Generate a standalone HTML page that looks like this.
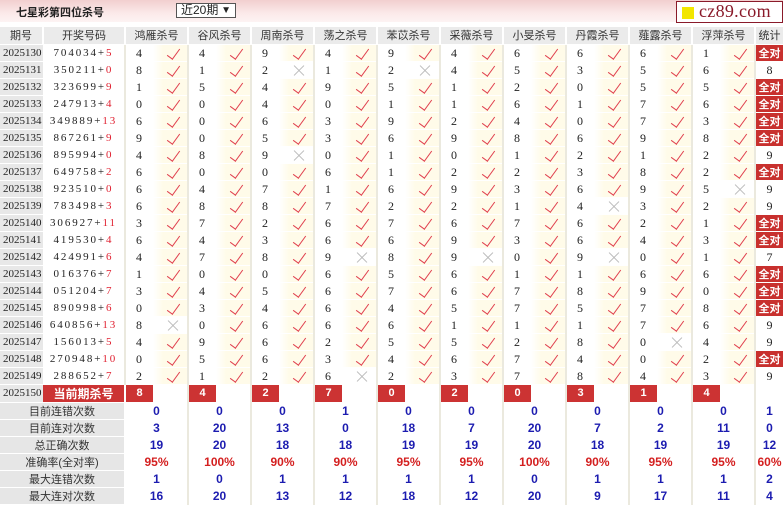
<!DOCTYPE html>
<html><head><meta charset="utf-8"><style>
*{margin:0;padding:0;box-sizing:border-box}
body{width:783px;height:503px;overflow:hidden;background:#fff;font-family:"Liberation Serif","Noto Serif CJK SC",serif;font-size:12px;color:#222;position:relative}
.bar{position:absolute;left:0;top:0;width:783px;height:22px;background:linear-gradient(#f2cfcf,#fbe9e9 60%,#fdf3f3)}
.ttl{position:absolute;left:16px;top:4px;font:bold 11px "Liberation Sans","Noto Sans CJK SC",sans-serif;color:#222}
.sel{position:absolute;left:176px;top:3px;width:60px;height:15px;border:1px solid #555;background:#fff;font:12px "Liberation Sans","Noto Sans CJK SC",sans-serif;line-height:13px;padding-left:4px}
.sel b{position:absolute;right:4px;top:0;font-size:10px}
.logo{position:absolute;left:676px;top:1px;width:107px;height:22px;border:1px solid #8a1a2a;background:#fff;font:18px "Liberation Serif",serif;color:#8a1a2a;line-height:19px;padding-left:22px;letter-spacing:0.3px;overflow:hidden;white-space:nowrap}
.logo i{position:absolute;left:5px;top:5px;width:12px;height:12px;background:#f2e600}
table{position:absolute;left:0;top:27px;border-collapse:collapse;table-layout:fixed;width:783px}
td{height:17px;padding:0;border-bottom:1px solid #fff;text-align:center;white-space:nowrap;overflow:hidden;line-height:16px}
tr.h td{background:#ebebeb;font:11px "Liberation Sans","Noto Sans CJK SC",sans-serif;color:#333;border-right:2px solid #fff}
td.p{background:#e8e8e8;font-size:11px;text-align:left;padding-left:3px}
td.q{letter-spacing:1.9px;font-size:11px}
td.q span{color:#e02030}
td.n{border-left:2px solid #ebe9de;text-align:left;padding-left:10px}
td.k{background:linear-gradient(90deg,#fff,#fffbe9 30%);position:relative}
td.x{background:#fff;position:relative}
td.k:before{content:"";position:absolute;left:17px;top:1px;width:6px;height:12px;border-right:1.6px solid #e0404e;border-bottom:1.6px solid #e0404e;transform:rotate(36deg)}
td.x:before,td.x:after{content:"";position:absolute;left:13px;top:8px;width:14px;height:1px;background:#bbb;transform:rotate(45deg)}
td.x:after{transform:rotate(-45deg)}
td.s{border-left:2px solid #ebe9de}
td.a{background:#c8302e;color:#fff;font:bold 11px "Liberation Sans","Noto Sans CJK SC",sans-serif;border-left:2px solid #ebe9de}
td.r{background:#cc3333;color:#fff;font:bold 12px "Liberation Sans","Noto Sans CJK SC",sans-serif}
td.rb{background:#cc3333;color:#fff;font:bold 11px "Liberation Sans",sans-serif;border-left:2px solid #ebe9de}
td.L{background:#e6e6e6;font:11px "Liberation Sans","Noto Sans CJK SC",sans-serif;color:#333;border-right:2px solid #fff}
td.v{font:bold 12px "Liberation Sans",sans-serif;color:#1c1cb0;border-left:2px solid #ebe9de}
td.v.z{color:#d42020}
</style></head><body>
<div class="bar"></div>
<div class="ttl">七星彩第四位杀号</div>
<div class="sel">近20期<b>&#9660;</b></div>
<div class="logo"><i></i>cz89.com</div>
<table>
<colgroup><col style="width:43px"><col style="width:82px">
<col style="width:28px"><col style="width:35px"><col style="width:28px"><col style="width:35px"><col style="width:28px"><col style="width:35px"><col style="width:28px"><col style="width:35px"><col style="width:28px"><col style="width:35px"><col style="width:28px"><col style="width:35px"><col style="width:28px"><col style="width:35px"><col style="width:28px"><col style="width:35px"><col style="width:28px"><col style="width:35px"><col style="width:28px"><col style="width:35px">
<col style="width:28px"></colgroup>
<tr class="h"><td>期号</td><td>开奖号码</td><td colspan="2">鸿雁杀号</td><td colspan="2">谷风杀号</td><td colspan="2">周南杀号</td><td colspan="2">荡之杀号</td><td colspan="2">苯苡杀号</td><td colspan="2">采薇杀号</td><td colspan="2">小旻杀号</td><td colspan="2">丹霞杀号</td><td colspan="2">薤露杀号</td><td colspan="2">浮萍杀号</td><td style="border-right:0">统计</td></tr>
<tr><td class="p">2025130</td><td class="q">704034+<span>5</span></td><td class="n">4</td><td class="k"></td><td class="n">4</td><td class="k"></td><td class="n">9</td><td class="k"></td><td class="n">4</td><td class="k"></td><td class="n">9</td><td class="k"></td><td class="n">4</td><td class="k"></td><td class="n">6</td><td class="k"></td><td class="n">6</td><td class="k"></td><td class="n">6</td><td class="k"></td><td class="n">1</td><td class="k"></td><td class="a">全对</td></tr>
<tr><td class="p">2025131</td><td class="q">350211+<span>0</span></td><td class="n">8</td><td class="k"></td><td class="n">1</td><td class="k"></td><td class="n">2</td><td class="x"></td><td class="n">1</td><td class="k"></td><td class="n">2</td><td class="x"></td><td class="n">4</td><td class="k"></td><td class="n">5</td><td class="k"></td><td class="n">3</td><td class="k"></td><td class="n">5</td><td class="k"></td><td class="n">6</td><td class="k"></td><td class="s">8</td></tr>
<tr><td class="p">2025132</td><td class="q">323699+<span>9</span></td><td class="n">1</td><td class="k"></td><td class="n">5</td><td class="k"></td><td class="n">4</td><td class="k"></td><td class="n">9</td><td class="k"></td><td class="n">5</td><td class="k"></td><td class="n">1</td><td class="k"></td><td class="n">2</td><td class="k"></td><td class="n">0</td><td class="k"></td><td class="n">5</td><td class="k"></td><td class="n">5</td><td class="k"></td><td class="a">全对</td></tr>
<tr><td class="p">2025133</td><td class="q">247913+<span>4</span></td><td class="n">0</td><td class="k"></td><td class="n">0</td><td class="k"></td><td class="n">4</td><td class="k"></td><td class="n">0</td><td class="k"></td><td class="n">1</td><td class="k"></td><td class="n">1</td><td class="k"></td><td class="n">6</td><td class="k"></td><td class="n">1</td><td class="k"></td><td class="n">7</td><td class="k"></td><td class="n">6</td><td class="k"></td><td class="a">全对</td></tr>
<tr><td class="p">2025134</td><td class="q">349889+<span>13</span></td><td class="n">6</td><td class="k"></td><td class="n">0</td><td class="k"></td><td class="n">6</td><td class="k"></td><td class="n">3</td><td class="k"></td><td class="n">9</td><td class="k"></td><td class="n">2</td><td class="k"></td><td class="n">4</td><td class="k"></td><td class="n">0</td><td class="k"></td><td class="n">7</td><td class="k"></td><td class="n">3</td><td class="k"></td><td class="a">全对</td></tr>
<tr><td class="p">2025135</td><td class="q">867261+<span>9</span></td><td class="n">9</td><td class="k"></td><td class="n">0</td><td class="k"></td><td class="n">5</td><td class="k"></td><td class="n">3</td><td class="k"></td><td class="n">6</td><td class="k"></td><td class="n">9</td><td class="k"></td><td class="n">8</td><td class="k"></td><td class="n">6</td><td class="k"></td><td class="n">9</td><td class="k"></td><td class="n">8</td><td class="k"></td><td class="a">全对</td></tr>
<tr><td class="p">2025136</td><td class="q">895994+<span>0</span></td><td class="n">4</td><td class="k"></td><td class="n">8</td><td class="k"></td><td class="n">9</td><td class="x"></td><td class="n">0</td><td class="k"></td><td class="n">1</td><td class="k"></td><td class="n">0</td><td class="k"></td><td class="n">1</td><td class="k"></td><td class="n">2</td><td class="k"></td><td class="n">1</td><td class="k"></td><td class="n">2</td><td class="k"></td><td class="s">9</td></tr>
<tr><td class="p">2025137</td><td class="q">649758+<span>2</span></td><td class="n">6</td><td class="k"></td><td class="n">0</td><td class="k"></td><td class="n">0</td><td class="k"></td><td class="n">6</td><td class="k"></td><td class="n">1</td><td class="k"></td><td class="n">2</td><td class="k"></td><td class="n">2</td><td class="k"></td><td class="n">3</td><td class="k"></td><td class="n">8</td><td class="k"></td><td class="n">2</td><td class="k"></td><td class="a">全对</td></tr>
<tr><td class="p">2025138</td><td class="q">923510+<span>0</span></td><td class="n">6</td><td class="k"></td><td class="n">4</td><td class="k"></td><td class="n">7</td><td class="k"></td><td class="n">1</td><td class="k"></td><td class="n">6</td><td class="k"></td><td class="n">9</td><td class="k"></td><td class="n">3</td><td class="k"></td><td class="n">6</td><td class="k"></td><td class="n">9</td><td class="k"></td><td class="n">5</td><td class="x"></td><td class="s">9</td></tr>
<tr><td class="p">2025139</td><td class="q">783498+<span>3</span></td><td class="n">6</td><td class="k"></td><td class="n">8</td><td class="k"></td><td class="n">8</td><td class="k"></td><td class="n">7</td><td class="k"></td><td class="n">2</td><td class="k"></td><td class="n">2</td><td class="k"></td><td class="n">1</td><td class="k"></td><td class="n">4</td><td class="x"></td><td class="n">3</td><td class="k"></td><td class="n">2</td><td class="k"></td><td class="s">9</td></tr>
<tr><td class="p">2025140</td><td class="q">306927+<span>11</span></td><td class="n">3</td><td class="k"></td><td class="n">7</td><td class="k"></td><td class="n">2</td><td class="k"></td><td class="n">6</td><td class="k"></td><td class="n">7</td><td class="k"></td><td class="n">6</td><td class="k"></td><td class="n">7</td><td class="k"></td><td class="n">6</td><td class="k"></td><td class="n">2</td><td class="k"></td><td class="n">1</td><td class="k"></td><td class="a">全对</td></tr>
<tr><td class="p">2025141</td><td class="q">419530+<span>4</span></td><td class="n">6</td><td class="k"></td><td class="n">4</td><td class="k"></td><td class="n">3</td><td class="k"></td><td class="n">6</td><td class="k"></td><td class="n">6</td><td class="k"></td><td class="n">9</td><td class="k"></td><td class="n">3</td><td class="k"></td><td class="n">6</td><td class="k"></td><td class="n">4</td><td class="k"></td><td class="n">3</td><td class="k"></td><td class="a">全对</td></tr>
<tr><td class="p">2025142</td><td class="q">424991+<span>6</span></td><td class="n">4</td><td class="k"></td><td class="n">7</td><td class="k"></td><td class="n">8</td><td class="k"></td><td class="n">9</td><td class="x"></td><td class="n">8</td><td class="k"></td><td class="n">9</td><td class="x"></td><td class="n">0</td><td class="k"></td><td class="n">9</td><td class="x"></td><td class="n">0</td><td class="k"></td><td class="n">1</td><td class="k"></td><td class="s">7</td></tr>
<tr><td class="p">2025143</td><td class="q">016376+<span>7</span></td><td class="n">1</td><td class="k"></td><td class="n">0</td><td class="k"></td><td class="n">0</td><td class="k"></td><td class="n">6</td><td class="k"></td><td class="n">5</td><td class="k"></td><td class="n">6</td><td class="k"></td><td class="n">1</td><td class="k"></td><td class="n">1</td><td class="k"></td><td class="n">6</td><td class="k"></td><td class="n">6</td><td class="k"></td><td class="a">全对</td></tr>
<tr><td class="p">2025144</td><td class="q">051204+<span>7</span></td><td class="n">3</td><td class="k"></td><td class="n">4</td><td class="k"></td><td class="n">5</td><td class="k"></td><td class="n">6</td><td class="k"></td><td class="n">7</td><td class="k"></td><td class="n">6</td><td class="k"></td><td class="n">7</td><td class="k"></td><td class="n">8</td><td class="k"></td><td class="n">9</td><td class="k"></td><td class="n">0</td><td class="k"></td><td class="a">全对</td></tr>
<tr><td class="p">2025145</td><td class="q">890998+<span>6</span></td><td class="n">0</td><td class="k"></td><td class="n">3</td><td class="k"></td><td class="n">4</td><td class="k"></td><td class="n">6</td><td class="k"></td><td class="n">4</td><td class="k"></td><td class="n">5</td><td class="k"></td><td class="n">7</td><td class="k"></td><td class="n">5</td><td class="k"></td><td class="n">7</td><td class="k"></td><td class="n">8</td><td class="k"></td><td class="a">全对</td></tr>
<tr><td class="p">2025146</td><td class="q">640856+<span>13</span></td><td class="n">8</td><td class="x"></td><td class="n">0</td><td class="k"></td><td class="n">6</td><td class="k"></td><td class="n">6</td><td class="k"></td><td class="n">6</td><td class="k"></td><td class="n">1</td><td class="k"></td><td class="n">1</td><td class="k"></td><td class="n">1</td><td class="k"></td><td class="n">7</td><td class="k"></td><td class="n">6</td><td class="k"></td><td class="s">9</td></tr>
<tr><td class="p">2025147</td><td class="q">156013+<span>5</span></td><td class="n">4</td><td class="k"></td><td class="n">9</td><td class="k"></td><td class="n">6</td><td class="k"></td><td class="n">2</td><td class="k"></td><td class="n">5</td><td class="k"></td><td class="n">5</td><td class="k"></td><td class="n">2</td><td class="k"></td><td class="n">8</td><td class="k"></td><td class="n">0</td><td class="x"></td><td class="n">4</td><td class="k"></td><td class="s">9</td></tr>
<tr><td class="p">2025148</td><td class="q">270948+<span>10</span></td><td class="n">0</td><td class="k"></td><td class="n">5</td><td class="k"></td><td class="n">6</td><td class="k"></td><td class="n">3</td><td class="k"></td><td class="n">4</td><td class="k"></td><td class="n">6</td><td class="k"></td><td class="n">7</td><td class="k"></td><td class="n">4</td><td class="k"></td><td class="n">0</td><td class="k"></td><td class="n">2</td><td class="k"></td><td class="a">全对</td></tr>
<tr><td class="p">2025149</td><td class="q">288652+<span>7</span></td><td class="n">2</td><td class="k"></td><td class="n">1</td><td class="k"></td><td class="n">2</td><td class="k"></td><td class="n">6</td><td class="x"></td><td class="n">2</td><td class="k"></td><td class="n">3</td><td class="k"></td><td class="n">7</td><td class="k"></td><td class="n">8</td><td class="k"></td><td class="n">4</td><td class="k"></td><td class="n">3</td><td class="k"></td><td class="s">9</td></tr>
<tr><td class="p">2025150</td><td class="r" style="border-right:2px solid #fff">当前期杀号</td><td class="rb">8</td><td></td><td class="rb">4</td><td></td><td class="rb">2</td><td></td><td class="rb">7</td><td></td><td class="rb">0</td><td></td><td class="rb">2</td><td></td><td class="rb">0</td><td></td><td class="rb">3</td><td></td><td class="rb">1</td><td></td><td class="rb">4</td><td></td><td class="s"></td></tr>
<tr><td class="L" colspan="2">目前连错次数</td><td class="v" colspan="2">0</td><td class="v" colspan="2">0</td><td class="v" colspan="2">0</td><td class="v" colspan="2">1</td><td class="v" colspan="2">0</td><td class="v" colspan="2">0</td><td class="v" colspan="2">0</td><td class="v" colspan="2">0</td><td class="v" colspan="2">0</td><td class="v" colspan="2">0</td><td class="v">1</td></tr>
<tr><td class="L" colspan="2">目前连对次数</td><td class="v" colspan="2">3</td><td class="v" colspan="2">20</td><td class="v" colspan="2">13</td><td class="v" colspan="2">0</td><td class="v" colspan="2">18</td><td class="v" colspan="2">7</td><td class="v" colspan="2">20</td><td class="v" colspan="2">7</td><td class="v" colspan="2">2</td><td class="v" colspan="2">11</td><td class="v">0</td></tr>
<tr><td class="L" colspan="2">总正确次数</td><td class="v" colspan="2">19</td><td class="v" colspan="2">20</td><td class="v" colspan="2">18</td><td class="v" colspan="2">18</td><td class="v" colspan="2">19</td><td class="v" colspan="2">19</td><td class="v" colspan="2">20</td><td class="v" colspan="2">18</td><td class="v" colspan="2">19</td><td class="v" colspan="2">19</td><td class="v">12</td></tr>
<tr><td class="L" colspan="2">准确率(全对率)</td><td class="v z" colspan="2">95%</td><td class="v z" colspan="2">100%</td><td class="v z" colspan="2">90%</td><td class="v z" colspan="2">90%</td><td class="v z" colspan="2">95%</td><td class="v z" colspan="2">95%</td><td class="v z" colspan="2">100%</td><td class="v z" colspan="2">90%</td><td class="v z" colspan="2">95%</td><td class="v z" colspan="2">95%</td><td class="v z">60%</td></tr>
<tr><td class="L" colspan="2">最大连错次数</td><td class="v" colspan="2">1</td><td class="v" colspan="2">0</td><td class="v" colspan="2">1</td><td class="v" colspan="2">1</td><td class="v" colspan="2">1</td><td class="v" colspan="2">1</td><td class="v" colspan="2">0</td><td class="v" colspan="2">1</td><td class="v" colspan="2">1</td><td class="v" colspan="2">1</td><td class="v">2</td></tr>
<tr><td class="L" colspan="2">最大连对次数</td><td class="v" colspan="2">16</td><td class="v" colspan="2">20</td><td class="v" colspan="2">13</td><td class="v" colspan="2">12</td><td class="v" colspan="2">18</td><td class="v" colspan="2">12</td><td class="v" colspan="2">20</td><td class="v" colspan="2">9</td><td class="v" colspan="2">17</td><td class="v" colspan="2">11</td><td class="v">4</td></tr>
</table>
</body></html>
